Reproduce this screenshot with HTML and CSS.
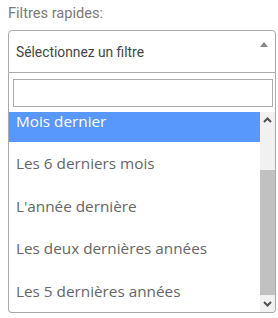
FILE: index.html
```html
<!DOCTYPE html>
<html lang="fr">
<head>
    <meta charset="UTF-8">
    <meta name="viewport" content="width=device-width, initial-scale=1.0">
    <title>Filtres rapides</title>
    <link rel="stylesheet" href="styles.css">
</head>
<body>
    <label class="field-label" for="filter_search">Filtres rapides:</label>
    <div class="filter-select">
        <div class="selection">
            <span class="selection-text">Sélectionnez un filtre</span>
            <span class="selection-arrow"></span>
        </div>
        <div class="dropdown">
            <div class="dropdown-search">
                <input type="text" id="filter_search" class="search-field">
            </div>
            <div class="results">
                <ul class="options" id="filter_options">
                    <li class="option">Ce mois-ci</li>
                    <li class="option highlighted">Mois dernier</li>
                    <li class="option">Les 6 derniers mois</li>
                    <li class="option">L'année dernière</li>
                    <li class="option">Les deux dernières années</li>
                    <li class="option">Les 5 dernières années</li>
                </ul>
                <div class="scrollbar">
                    <div class="scroll-btn">
                        <svg width="9" height="6" viewBox="0 0 9 6"><path d="M1 5 L4.5 1.5 L8 5" fill="none" stroke="#505050" stroke-width="2"/></svg>
                    </div>
                    <div class="scroll-track">
                        <div class="scroll-thumb"></div>
                    </div>
                    <div class="scroll-btn">
                        <svg width="9" height="6" viewBox="0 0 9 6"><path d="M1 1 L4.5 4.5 L8 1" fill="none" stroke="#505050" stroke-width="2"/></svg>
                    </div>
                </div>
            </div>
        </div>
    </div>

<script>
    // keep the list scrolled to the last options
    var list = document.getElementById("filter_options");
    list.scrollTop = list.scrollHeight;
</script>
</body>
</html>
```

FILE: styles.css
```css
body {
    margin: 4px 2px 0 8px;
    background-color: #ffffff;
    font-family: Roboto, "Noto Sans", sans-serif;
}

.field-label {
    display: block;
    font-size: 14.6px;
    line-height: 18px;
    color: #7a7a7a;
    margin-bottom: 8px;
}

.filter-select {
    width: 268px;
}

.selection {
    height: 43px;
    border: 1px solid #aaaaaa;
    border-radius: 4px 4px 0 0;
    display: flex;
    align-items: center;
    justify-content: space-between;
    padding: 0 7px 0 7px;
    box-sizing: border-box;
}

.selection-text {
    font-size: 13.8px;
    color: #444444;
    padding-top: 1px;
}

.selection-arrow {
    width: 0;
    height: 0;
    border-style: solid;
    border-width: 0 4px 5px 4px;
    border-color: transparent transparent #888888 transparent;
    margin-bottom: 14px;
}

.dropdown {
    border: 1px solid #aaaaaa;
    border-top: none;
    border-radius: 0 0 4px 4px;
    overflow: hidden;
}

.dropdown-search {
    padding: 6px 2px 5px 4px;
}

.search-field {
    display: block;
    width: 100%;
    height: 28px;
    box-sizing: border-box;
    border: 1px solid #aaaaaa;
    margin: 0;
    padding: 4px;
    outline: none;
}

.results {
    display: flex;
    height: 200px;
}

.options {
    flex: 1;
    list-style: none;
    margin: 0;
    padding: 0;
    height: 200px;
    overflow: hidden;
    font-family: "Open Sans", sans-serif;
}

.option {
    font-size: 15.3px;
    line-height: 20px;
    padding: 11.25px 6px 11.25px 7px;
    color: #666666;
}

.option.highlighted {
    background-color: #5897fb;
    color: #ffffff;
}

.scrollbar {
    width: 15px;
    display: flex;
    flex-direction: column;
    background-color: #f1f1f1;
}

.scroll-btn {
    height: 16px;
    display: flex;
    align-items: center;
    justify-content: center;
}

.scroll-track {
    flex: 1;
    padding: 42px 0 1px 0;
}

.scroll-thumb {
    height: 125px;
    background-color: #c1c1c1;
}
```
